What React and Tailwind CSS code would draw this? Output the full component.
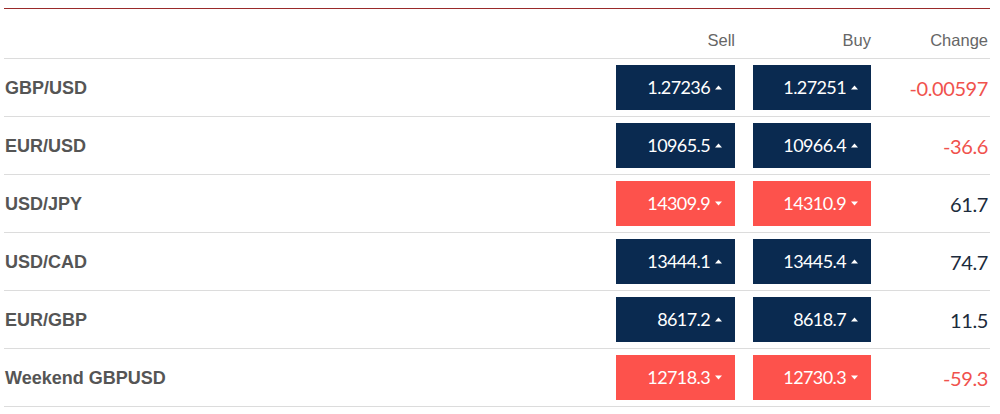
import React from "react";

const rows = [
  { pair: "GBP/USD", sell: "1.27236", buy: "1.27251", change: "-0.00597", up: true },
  { pair: "EUR/USD", sell: "10965.5", buy: "10966.4", change: "-36.6", up: true },
  { pair: "USD/JPY", sell: "14309.9", buy: "14310.9", change: "61.7", up: false },
  { pair: "USD/CAD", sell: "13444.1", buy: "13445.4", change: "74.7", up: true },
  { pair: "EUR/GBP", sell: "8617.2", buy: "8618.7", change: "11.5", up: true },
  { pair: "Weekend GBPUSD", sell: "12718.3", buy: "12730.3", change: "-59.3", up: false },
];

function Arrow({ up }) {
  return (
    <svg width="7" height="5" viewBox="0 0 7 5" className="ml-[5px] shrink-0">
      {up ? <polygon points="0,4.5 3.5,0.5 7,4.5" fill="white" /> : <polygon points="0,0.5 3.5,4.5 7,0.5" fill="white" />}
    </svg>
  );
}

function PriceBox({ value, up, w }) {
  return (
    <div
      className={`${w} h-[45px] flex items-center justify-end pr-[13px] text-white text-[18px] tracking-[-0.6px] ${
        up ? "bg-[#0a2a50]" : "bg-[#fd524c]"
      }`}
      style={{ fontFamily: "Lato, 'Open Sans', sans-serif" }}
    >
      <span>{value}</span>
      <Arrow up={up} />
    </div>
  );
}

export default function App() {
  return (
    <div className="w-[1000px] h-[414px] bg-white pt-[8px] px-[4px]" style={{ fontFamily: "'Liberation Sans', Arial, sans-serif" }}>
      <div className="w-[986px] border-t-[1.5px] border-[#9a2a2a]">
        <div className="flex items-end h-[50px] border-b border-[#dcdcdc] pb-[5px] text-[#666] text-[16.5px]">
          <div className="flex-1" />
          <div className="w-[119px] text-right">Sell</div>
          <div className="w-[18px]" />
          <div className="w-[118px] text-right">Buy</div>
          <div className="w-[119px] text-right pr-[2px]">Change</div>
        </div>
        {rows.map((r) => (
          <div key={r.pair} className="flex items-center h-[58px] border-b border-[#dcdcdc]">
            <div className="flex-1 text-[18px] font-bold text-[#555] pl-[1px] pt-[1px]">{r.pair}</div>
            <PriceBox value={r.sell} up={r.up} w="w-[119px]" />
            <div className="w-[18px]" />
            <PriceBox value={r.buy} up={r.up} w="w-[118px]" />
            <div
              className={`w-[119px] text-right pr-[2px] text-[20px] tracking-[-0.4px] ${
                r.change.startsWith("-") ? "text-[#f0524d]" : "text-[#1c2b3c]"
              }`}
              style={{ fontFamily: "Lato, 'Open Sans', sans-serif" }}
            >
              {r.change}
            </div>
          </div>
        ))}
      </div>
    </div>
  );
}
